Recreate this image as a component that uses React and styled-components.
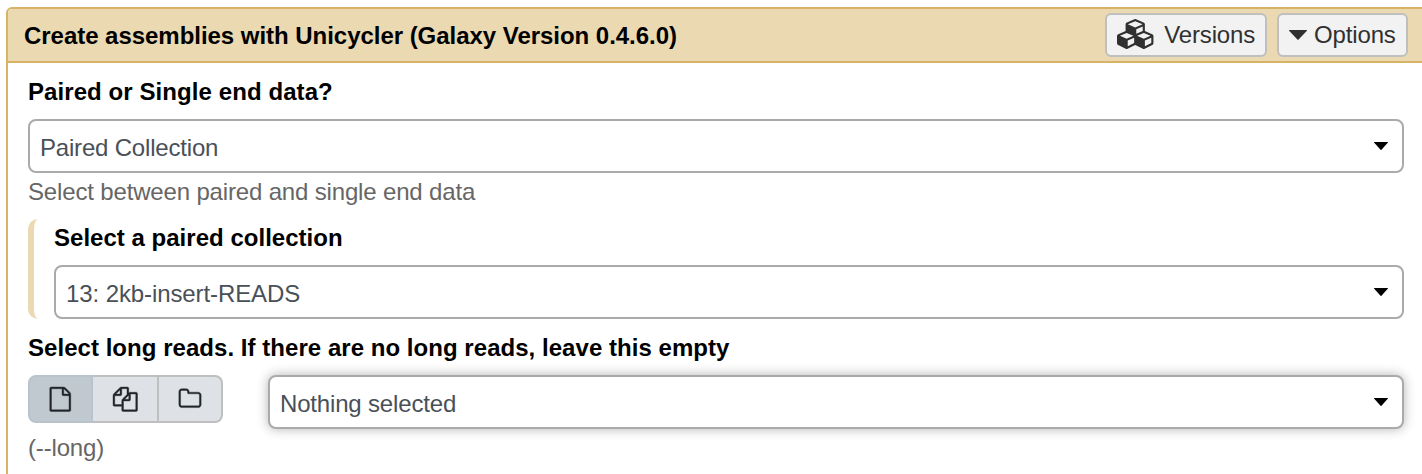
import React from "react";
import styled, { createGlobalStyle, css } from "styled-components";

const GlobalStyle = createGlobalStyle`
  *, *::before, *::after { box-sizing: border-box; }
  html, body { margin: 0; height: 474px; overflow: hidden; background: #fff; }
  body { font: 24px/36px "Liberation Sans", Arial, sans-serif; color: #000; }
  button { font: inherit; margin: 0; cursor: pointer; }
`;

const Panel = styled.section`
  margin: 7px 0 0 6px;
  width: 1422px;
  height: 480px;
  border: 2px solid #d8b365;
  border-radius: 6px;
`;

const Header = styled.header`
  display: flex;
  align-items: center;
  justify-content: space-between;
  height: 54px;
  padding: 0 18px 0 16px;
  background: #ebd9b2;
  border-bottom: 2px solid #d8b365;
  border-radius: 4px 4px 0 0;
`;

const Title = styled.h1`
  margin: 2px 0 0;
  font-size: 24px;
  line-height: 36px;
  font-weight: bold;
  letter-spacing: -0.036px;
`;

const HeaderActions = styled.div`
  display: flex;
  gap: 10px;
`;

const HeaderButton = styled.button`
  display: flex;
  align-items: center;
  gap: ${(p) => p.$gap}px;
  width: ${(p) => p.$width}px;
  height: 44px;
  padding: 0 0 0 ${(p) => p.$inset}px;
  border: 2px solid #bfbfbf;
  border-radius: 6px;
  background: #f2f2f2;
  color: #303030;
  letter-spacing: -0.14px;
`;

const Body = styled.div`
  padding: 11px 22px 0 20px;
`;

const Label = styled.div`
  height: 36px;
  font-weight: bold;
  letter-spacing: ${(p) => p.$tracking || 0}px;
`;

const Help = styled.div`
  height: 36px;
  margin-top: 1px;
  color: #666;
  letter-spacing: -0.16px;
`;

const SelectBox = styled.div`
  display: flex;
  align-items: center;
  justify-content: space-between;
  flex: 1;
  height: 54px;
  margin-top: ${(p) => (p.$raised ? 0 : 9)}px;
  padding: 0 14px 0 10px;
  border: 2px solid #aaa;
  border-radius: 8px;
  background: #fff;
  color: #495057;
  ${(p) =>
    p.$raised &&
    css`
      box-shadow: 0 0 12px rgba(0, 0, 0, 0.3);
    `}
`;

const SelectValue = styled.span`
  padding-top: 3px;
  letter-spacing: ${(p) => p.$tracking}px;
`;

const Nested = styled.div`
  height: 100px;
  margin-top: 9px;
  padding: 1px 0 0 20px;
  border-left: 6px solid #ebd9b2;
  border-radius: 10px 0 0 10px;
`;

const LongReads = styled.div`
  padding-top: 11px;
`;

const SourceRow = styled.div`
  display: flex;
  align-items: flex-start;
  gap: 45px;
  margin-top: 9px;
`;

const SourceGroup = styled.div`
  display: flex;
`;

const SourceButton = styled.button`
  display: flex;
  align-items: center;
  justify-content: center;
  width: ${(p) => p.$width}px;
  height: 48px;
  padding: 0 ${(p) => (p.$active ? 1 : 0)}px 0 0;
  border: 2px solid ${(p) => (p.$active ? "#b9c3cc" : "#bfbfbf")};
  background: ${(p) => (p.$active ? "#c1c9d0" : "#dee2e6")};
  color: #212529;
  &:first-child { border-radius: 8px 0 0 8px; }
  &:not(:first-child) { border-left-width: 0; }
  &:last-child { border-radius: 0 8px 8px 0; }
`;

const Glyph = styled.svg`
  display: block;
  flex: none;
  fill: currentColor;
`;

const CaretGlyph = styled(Glyph)`
  margin-top: ${(p) => p.$lift}px;
`;

const CubesGlyph = styled(Glyph)`
  margin-top: -2px;
`;

const OutlineGlyph = styled(Glyph)`
  stroke: currentColor;
  stroke-width: 28px;
`;

function Caret({ width, height, lift = 0 }) {
  return (
    <CaretGlyph $lift={lift} width={width} height={height} viewBox="0 0 18 10" preserveAspectRatio="none">
      <path d="M0.3 0H17.7Q18.2 0.5 17.7 1L9.6 9.6Q9 10.2 8.4 9.6L0.3 1Q-0.2 0.5 0.3 0z" />
    </CaretGlyph>
  );
}

const SelectCaret = styled.span`
  display: flex;
  color: #000;
`;

const Cubes = () => (
  <CubesGlyph width="38.6" height="30" viewBox="0 0 2304 1792" overflow="visible">
    <path d="M640 1632l384-192v-314l-384 164v342zm-64-454l404-173-404-173-404 173zm1088 454l384-192v-314l-384 164v342zm-64-454l404-173-404-173-404 173zm-448-293l384-165v-266l-384 164v267zm-64-379l441-189-441-189-441 189zm1088 518v416q0 36-19 67t-52 47l-448 224q-25 14-57 14t-57-14l-448-224q-4-2-7-4-2 2-7 4l-448 224q-25 14-57 14t-57-14l-448-224q-33-16-52-47t-19-67v-416q0-38 21.5-70t56.5-48l434-186v-400q0-38 21.5-70t56.5-48l448-192q23-10 50-10t50 10l448 192q35 16 56.5 48t21.5 70v400l434 186q36 16 57 48t21 70z" />
  </CubesGlyph>
);

const FileIcon = () => (
  <OutlineGlyph width="24.5" height="24.5" viewBox="0 0 1792 1792" overflow="visible">
    <path d="M1596 380q28 28 48 76t20 88v1152q0 40-28 68t-68 28h-1344q-40 0-68-28t-28-68v-1600q0-40 28-68t68-28h896q40 0 88 20t76 48zm-444-244v376h376q-10-29-22-41l-313-313q-12-12-41-22zm384 1528v-1024h-416q-40 0-68-28t-28-68v-416h-768v1536h1280z" />
  </OutlineGlyph>
);

const FilesIcon = () => (
  <OutlineGlyph width="24.5" height="24.5" viewBox="0 0 1792 1792" overflow="visible">
    <path d="M1696 384q40 0 68 28t28 68v1216q0 40-28 68t-68 28h-960q-40 0-68-28t-28-68v-288h-544q-40 0-68-28t-28-68v-672q0-40 20-88t48-76l408-408q28-28 76-48t88-20h416q40 0 68 28t28 68v328q68-40 128-40h416zm-544 213l-299 299h299v-299zm-640-384l-299 299h299v-299zm196 647l316-316v-416h-384v416q0 40-28 68t-68 28h-416v640h512v-256q0-40 20-88t48-76zm956 804v-1152h-384v416q0 40-28 68t-68 28h-416v640h896z" />
  </OutlineGlyph>
);

const FolderIcon = () => (
  <OutlineGlyph width="24" height="24" viewBox="0 0 1792 1792" overflow="visible">
    <path d="M1600 1312v-704q0-40-28-68t-68-28h-704q-40 0-68-28t-28-68v-64q0-40-28-68t-68-28h-320q-40 0-68 28t-28 68v960q0 40 28 68t68 28h1216q40 0 68-28t28-68zm128-704v704q0 92-66 158t-158 66h-1216q-92 0-158-66t-66-158v-960q0-92 66-158t158-66h320q92 0 158 66t66 158v32h672q92 0 158 66t66 158z" />
  </OutlineGlyph>
);

function Select({ value, raised, tracking }) {
  return (
    <SelectBox $raised={raised}>
      <SelectValue $tracking={tracking}>{value}</SelectValue>
      <SelectCaret>
        <Caret width={14} height={8} />
      </SelectCaret>
    </SelectBox>
  );
}

export default function App() {
  return (
    <>
      <GlobalStyle />
      <Panel>
        <Header>
          <Title>Create assemblies with Unicycler (Galaxy Version 0.4.6.0)</Title>
          <HeaderActions>
            <HeaderButton $width={162} $inset={9.6} $gap={9}>
              <Cubes />
              <span>Versions</span>
            </HeaderButton>
            <HeaderButton $width={131} $inset={10} $gap={7}>
              <Caret width={18} height={10} />
              <span>Options</span>
            </HeaderButton>
          </HeaderActions>
        </Header>
        <Body>
          <Label $tracking={0.08}>Paired or Single end data?</Label>
          <Select value="Paired Collection" tracking={-0.19} />
          <Help>Select between paired and single end data</Help>
          <Nested>
            <Label $tracking={0.02}>Select a paired collection</Label>
            <Select value="13: 2kb-insert-READS" tracking={-0.1} />
          </Nested>
          <LongReads>
            <Label $tracking={0.04}>Select long reads. If there are no long reads, leave this empty</Label>
            <SourceRow>
              <SourceGroup>
                <SourceButton $width={65} $active aria-label="Single dataset"><FileIcon /></SourceButton>
                <SourceButton $width={66} aria-label="Multiple datasets"><FilesIcon /></SourceButton>
                <SourceButton $width={64} aria-label="Dataset collection"><FolderIcon /></SourceButton>
              </SourceGroup>
              <Select value="Nothing selected" tracking={-0.17} raised />
            </SourceRow>
            <Help>(--long)</Help>
          </LongReads>
        </Body>
      </Panel>
    </>
  );
}
